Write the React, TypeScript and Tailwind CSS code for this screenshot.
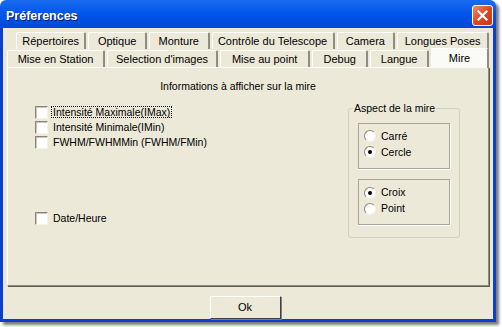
import React from 'react';

const row1 = [
  { label: 'Répertoires', w: 72 },
  { label: 'Optique', w: 60 },
  { label: 'Monture', w: 62 },
  { label: 'Contrôle du Telescope', w: 126 },
  { label: 'Camera', w: 60 },
  { label: 'Longues Poses', w: 94 },
];

const row2 = [
  { label: 'Mise en Station', w: 100 },
  { label: "Selection d'images", w: 113 },
  { label: 'Mise au point', w: 92 },
  { label: 'Debug', w: 57 },
  { label: 'Langue', w: 60 },
];

function Tab({ label, w }: { label: string; w: number }) {
  return (
    <div
      className="h-[17px] flex items-center justify-center border-t border-l border-white border-r-2 border-r-[#8f8c80] rounded-t-[2px] bg-[#ECE9D8]"
      style={{ width: w }}
    >
      {label}
    </div>
  );
}

function Check({ label, focus }: { label: string; focus?: boolean }) {
  return (
    <div className="flex items-center h-[15px]">
      <div className="w-[13px] h-[13px] bg-white border border-t-[#8a877a] border-l-[#8a877a] border-r-[#f4f3ee] border-b-[#f4f3ee] shadow-[inset_1px_1px_0_#c9c6b8]" />
      <span className={`ml-[4px] px-[1px] ${focus ? 'outline outline-1 outline-dotted outline-black' : ''}`}>{label}</span>
    </div>
  );
}

function Radio({ label, checked }: { label: string; checked?: boolean }) {
  return (
    <div className="flex items-center h-[16px]">
      <div className="w-[12px] h-[12px] rounded-full bg-white border border-t-[#8a877a] border-l-[#8a877a] border-r-[#f4f3ee] border-b-[#f4f3ee] flex items-center justify-center">
        {checked && <div className="w-[4px] h-[4px] rounded-full bg-black" />}
      </div>
      <span className="ml-[5px]">{label}</span>
    </div>
  );
}

export default function App() {
  return (
    <div
      className="w-[502px] h-[327px] bg-white text-[11px] text-black leading-none"
      style={{ fontFamily: '"Liberation Sans", Arial, sans-serif' }}
    >
      <div className="w-[496px] h-[322px] flex flex-col rounded-t-[6px] overflow-hidden shadow-[3px_3px_3px_#7a7a7a]">
        {/* Title bar */}
        <div className="h-[30px] flex items-center justify-between pl-[6px] pr-[3px] pt-[2px] bg-gradient-to-b from-[#1a6cf0] via-[#0055ea] to-[#0048d8]">
          <span className="text-white font-bold text-[12.5px] pt-[2px] [text-shadow:1px_1px_0_#0a1a6a]">
            Préferences
          </span>
          <div className="w-[21px] h-[21px] rounded-[3px] border border-white bg-gradient-to-br from-[#f08a6a] via-[#e0461f] to-[#c23a16] flex items-center justify-center">
            <svg width="11" height="11" viewBox="0 0 11 11">
              <path d="M1.5 1.5 L9.5 9.5 M9.5 1.5 L1.5 9.5" stroke="white" strokeWidth="2.2" strokeLinecap="square" />
            </svg>
          </div>
        </div>

        {/* Body */}
        <div className="flex-1 flex flex-col bg-[#ECE9D8] border-l-[3px] border-r-[3px] border-b-[3px] border-[#0a3fd0] px-[4px] pt-[4px]">
          {/* Tabs row 1 */}
          <div className="flex ml-[9px] gap-[2px]">
            {row1.map((t) => (
              <Tab key={t.label} {...t} />
            ))}
          </div>
          {/* Tabs row 2 */}
          <div className="flex items-end gap-[2px] h-[18px]">
            {row2.map((t) => (
              <Tab key={t.label} {...t} />
            ))}
            <div className="w-[59px] h-[20px] -mb-[1px] z-10 flex items-start justify-center pt-[4px] bg-[#FAFAF6] border-t border-l border-white border-r-2 border-r-[#8f8c80] rounded-t-[2px]">
              Mire
            </div>
          </div>

          {/* Panel */}
          <div className="h-[219px] w-[482px] border border-t-white border-l-white border-r-[#8f8c80] border-b-[#8f8c80] shadow-[1px_1px_0_#5d5b52] bg-[#ECE9D8] relative text-[10.5px]">
            <div className="text-center pt-[13px] pr-[20px]">Informations à afficher sur la mire</div>
            <div className="flex">
              <div className="flex flex-col ml-[27px] mt-[13px] w-[300px]">
                <Check label="Intensité Maximale(IMax)" focus />
                <Check label="Intensité Minimale(IMin)" />
                <Check label="FWHM/FWHMMin (FWHM/FMin)" />
                <div className="h-[61px]" />
                <Check label="Date/Heure" />
              </div>
              <div className="ml-[13px] mt-[16px] w-[112px] h-[130px] border border-[#d0d0bf] rounded-[3px] relative px-[9px] pt-[14px]">
                <span className="absolute -top-[6px] left-[4px] px-[1px] bg-[#ECE9D8]">Aspect de la mire</span>
                <div className="h-[46px] border border-[#a9a596] shadow-[1px_1px_0_white] flex flex-col justify-center pl-[5px] pb-[3px]">
                  <Radio label="Carré" />
                  <Radio label="Cercle" checked />
                </div>
                <div className="h-[46px] mt-[10px] border border-[#a9a596] shadow-[1px_1px_0_white] flex flex-col justify-center pl-[5px] pb-[2px]">
                  <Radio label="Croix" checked />
                  <Radio label="Point" />
                </div>
              </div>
            </div>
          </div>

          {/* OK button */}
          <div className="flex justify-center mt-[10px] pr-[6px]">
            <div className="w-[71px] h-[23px] border border-t-white border-l-white border-r-[#404040] border-b-[#404040] shadow-[1px_1px_0_#808080] bg-[#ECE9D8] flex items-center justify-center">
              Ok
            </div>
          </div>
        </div>
      </div>
    </div>
  );
}
